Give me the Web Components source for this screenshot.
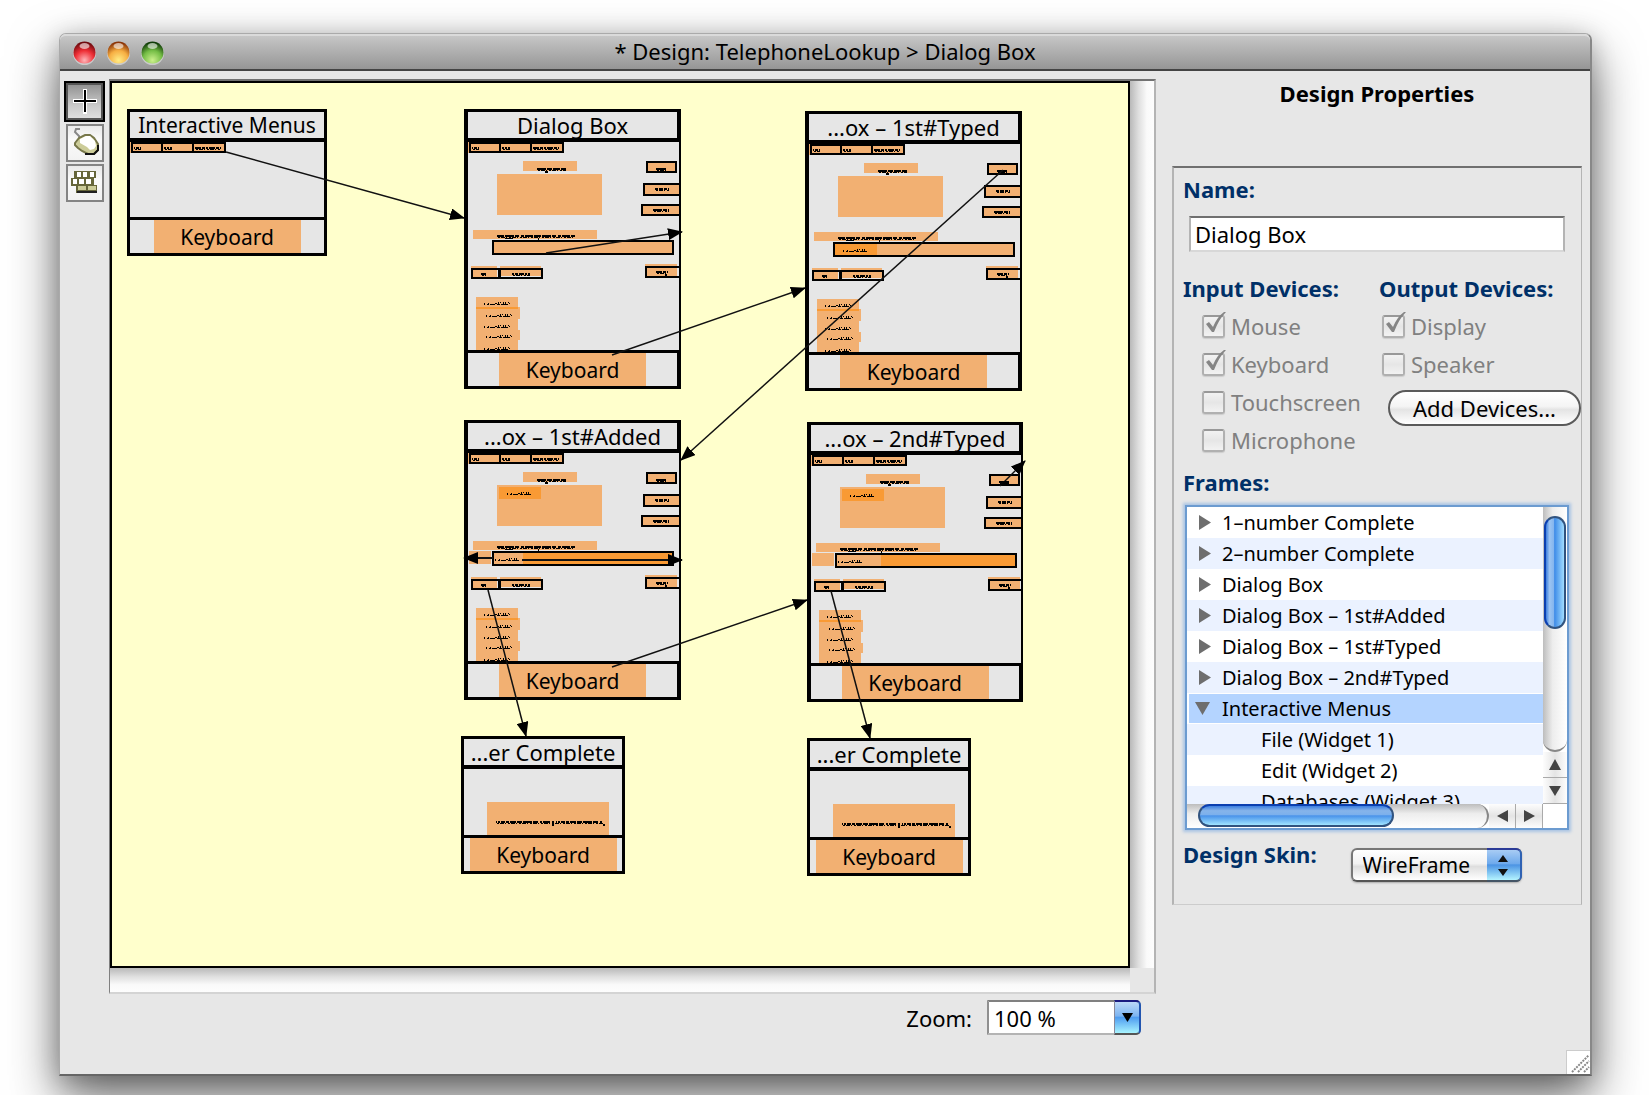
<!DOCTYPE html>
<html lang="en">
<head>
<meta charset="utf-8">
<title>Design: TelephoneLookup</title>
<style>
html,body{margin:0;background:#fff}
body{font-family:"Noto Sans","Open Sans",sans-serif;font-size:22px;line-height:28px;color:#000}
</style>
</head>
<body>
<design-app></design-app>
<script>
const define = (name, html, setup) => {
  const tpl = document.createElement('template');
  tpl.innerHTML = '<style>*{box-sizing:border-box}button,input,select{font:inherit;color:inherit;margin:0}</style>' + html;
  customElements.define(name, class extends HTMLElement {
    connectedCallback() {
      if (this.shadowRoot) return;
      this.attachShadow({mode: 'open'}).append(tpl.content.cloneNode(true));
      if (setup) setup(this, this.shadowRoot);
    }
  });
};

/* ---------- title bar ---------- */
const light = (label, id, lo, mid, hi) => `<button aria-label="${label}"><svg width="23" height="24" viewBox="0 0 23 24"><defs><radialGradient id="${id}" cx=".5" cy=".85" r=".8"><stop offset="0" stop-color="${lo}"/><stop offset=".55" stop-color="${mid}"/><stop offset="1" stop-color="${hi}"/></radialGradient></defs><circle cx="11.5" cy="12.5" r="11.5" fill="#ddd" opacity=".7"/><circle cx="11.5" cy="11.5" r="11" fill="url(#${id})"/><ellipse cx="11.5" cy="5" rx="5" ry="3" fill="#fff" opacity=".6"/></svg></button>`;
define('title-bar', `
<style>
:host{display:flex;align-items:center;height:37px;padding:0 13px;border-top:2px solid #dadada;border-bottom:2px solid #444;
 border-radius:6px 6px 0 0;background:linear-gradient(#c6c6c6,#969696)}
.lights{display:flex;gap:11px;flex:1}
button{width:23px;height:23px;border:0;padding:0;background:none;display:block}
svg{display:block}
h1{margin:0;padding-bottom:3px;font-size:22px;font-weight:400;line-height:28px;text-align:center}
.end{flex:1}
</style>
<div class="lights">${light('Close', 'red', '#ffb4b8', '#ee2e35', '#6e0a0e')}${light('Minimize', 'amber', '#ffec85', '#f6ae42', '#8a3306')}${light('Zoom window', 'green', '#ccf08c', '#74bd45', '#103c08')}</div>
<h1><slot></slot></h1>
<div class="end"></div>`);

/* ---------- tool palette ---------- */
define('tool-palette', `
<style>
:host{display:flex;flex-direction:column;align-items:center;gap:2px;padding:2px 4px 0;width:49px;flex:none}
button{display:block;width:38px;height:38px;padding:0;border:2px solid #848484;background:linear-gradient(#e9e9e9,#fafafa 40%,#f2f2f2)}
button.on{width:41px;height:41px;border:2px solid #000;outline:0;box-shadow:inset 0 0 0 2px #555;background:linear-gradient(#8d8d8d,#c9c9c9 60%,#e2e2e2)}
svg{display:block;margin:auto}
</style>
<button class="on" aria-label="Select" aria-pressed="true"><svg width="24" height="26" shape-rendering="crispEdges"><path d="M12 0v25M0 12h24" stroke="#fff" stroke-width="4"/><path d="M12 1v22M1 12h22" stroke="#000" stroke-width="2"/></svg></button>
<button aria-label="Mouse"><svg width="34" height="34"><path d="M12 3H8l-1 3 4 4 1 4" fill="none" stroke="#888" stroke-width="2"/><path d="M7 17l4-5 6-3h5l4 3 4 6v6l-4 4h-6l-6-3-4-3-3-3z" fill="#cccc99" stroke="#77774a" stroke-width="2"/><path d="M12 13l6-3h4l5 5 1 5-2 3-4 1-3-3-7-4z" fill="#fff"/><path d="M17 28h9l4-4v-5" fill="none" stroke="#111" stroke-width="2"/></svg></button>
<button aria-label="Keyboard"><svg width="34" height="34" shape-rendering="crispEdges"><path d="M6 5h22v7h-2v7h3v8H8v-7H3v-8h3z" fill="#66663a"/><path d="M9 6h4v5H9zM15 6h4v5h-4zM22 6h4v5h-4zM5 13h4v5H5zM11 13h5v5h-5zM18 13h5v5h-5z" fill="#fff"/><path d="M10 20h8v4h-8zM20 20h8v4h-8z" fill="#cccc99"/><path d="M9 26h20" stroke="#222" stroke-width="2"/></svg></button>`);

/* ---------- frame node ---------- */
define('design-frame', `
<style>
:host{display:flex;flex-direction:column;position:absolute;border:solid #000;border-width:3px 2px 3px 4px;background:#e6e6e6;overflow:hidden}
:host([plain]){border-width:3px}
.name,.key{display:flex;align-items:center;justify-content:center;border-right:2px solid #000;white-space:nowrap;overflow:hidden;flex:none}
:host([plain]) .name,:host([plain]) .key{border-right:0}
.name{height:30px;border-bottom:4px solid #000}
:host([kind=menus]) .name{font-size:21px}
.key{height:36px;border-top:3px solid #000;align-items:stretch;font-size:21px}
.key span{width:147px;text-align:center;line-height:34px;background:#f2b072}
.body{flex:1;min-height:0;overflow:hidden}
</style>
<div class="name"><slot></slot></div><div class="body"></div><div class="key"><span>Keyboard</span></div>`, (el, root) => {
  const kind = el.getAttribute('kind');
  const F = '#f2b072', H = '#f99a34';
  const fill = (x, y, w, h, c = F) => `<rect x="${x}" y="${y}" width="${w}" height="${h}" fill="${c}"/>`;
  const box = (x, y, w, h, c = 'none') => `<rect x="${x + 1}" y="${y + 1}" width="${w - 2}" height="${h - 2}" fill="${c}" stroke="#000" stroke-width="2"/>`;
  const mark = (x, y, w, d = '3 1 2 1 5 1 1 1 4 2 2 1') =>
    `<path d="M${x} ${y}h${w}" stroke="#000" stroke-width="2" stroke-dasharray="${d}"/><path d="M${x + 1} ${y + 1}h${w - 1}" stroke="#000" stroke-width="1" stroke-dasharray="2 1 4 1 1 2"/>`;
  const thin = (x, y, w) =>
    `<path d="M${x} ${y + 1}h${w}" stroke="#000" stroke-width="1" stroke-dasharray="1 2 2 1 5 2 3 1 7 3"/><path d="M${x} ${y}h${w}" stroke="#000" stroke-width="1" stroke-dasharray="1 3 1 6 2 1 1 4 1 1"/><path d="M${x + 14} ${y - 1}h${w - 15}" stroke="#000" stroke-width="1" stroke-dasharray="1 1 1 2"/>`;
  const menus = fill(0, 0, 96, 11) + box(1, 0, 32, 11) + box(31, 0, 33, 11) + box(62, 0, 34, 11)
    + mark(4, 6, 7, '1 1 3 1') + mark(34, 6, 8, '2 1 2 1') + mark(65, 6, 26, '6 1 3 1 2 1');
  let s = menus;
  if (kind === 'note') s = fill(23, 33, 122, 33) + mark(32, 53, 107, '1 1 2 1 4 1 3 1 6 1 5 1 9 1 5 2 2 1 7 2 2 2') + fill(88, 55, 2, 2, '#000') + fill(139, 55, 2, 2, '#000');
  if (kind === 'dialog') {
    const v = el.getAttribute('state');
    s += fill(55, 19, 54, 10) + mark(69, 27, 29, '9 1 5 1 7 1') + fill(77, 29, 3, 2, '#000')
      + fill(29, 32, 105, 41)
      + box(178, 19, 31, 12, F) + mark(188, 27, 10, '10 1')
      + box(175, 41, 40, 13, F) + mark(187, 47, 14, '3 1 4 1')
      + box(173, 62, 42, 12, F) + mark(185, 68, 16, '9 1 4 1')
      + fill(5, 88, 124, 9) + mark(29, 94, 78, '7 1 9 1 4 2 3 1 8 1') + fill(37, 96, 8, 1, '#000') + fill(70, 96, 1, 3, '#000');
    if (v === 'added' || v === 'second') s += fill(31, 34, 42, 12, H) + thin(39, 40, 25) + fill(1, 98, 22, 13);
    s += box(24, 98, 182, 15, F);
    if (v === 'typed') s += fill(26, 100, 42, 11, H) + thin(34, 106, 25);
    if (v === 'added' || v === 'second') s += (v === 'added' ? fill(55, 100, 149, 11, H) : fill(70, 100, 134, 11, H)) + thin(27, 106, 24);
    s += fill(3, 124, 26, 12) + box(3, 126, 29, 11) + mark(13, 132, 5, '5')
      + fill(32, 124, 41, 10) + box(31, 126, 44, 11) + mark(44, 132, 18, '2 1 3 1 5 1')
      + fill(177, 122, 32, 13) + box(177, 124, 36, 12) + mark(188, 130, 12, '6 1 3 1') + fill(197, 132, 2, 2, '#000');
    s += fill(8, 155, 42, 53) + fill(50, 165, 2, 12) + fill(50, 188, 2, 10) + fill(8, 165, 42, 2, H);
    [[16, 161], [18, 173], [16, 184], [18, 194], [16, 206]].forEach(([x, y]) => s += thin(x, y, 26));
  }
  root.querySelector('.body').innerHTML = `<svg width="213" height="208" style="display:block" shape-rendering="crispEdges" aria-hidden="true">${s}</svg>`;
});

/* ---------- canvas with its links ---------- */
define('design-canvas', `
<style>
:host{display:grid;grid-template:1fr 24px / 1fr 24px;flex:1;border:2px solid #b4b4b4;border-top-color:#727272;border-left:1px solid #808080;border-bottom-color:#d4d4d4}
.sheet{position:relative;background:#ffffcc;border:2px solid #000;overflow:hidden}
.v{background:linear-gradient(90deg,#b9b9b9,#dedede 35%,#fafafa 70%,#fdfdfd)}
.h{background:linear-gradient(#b9b9b9,#dedede 35%,#fafafa 70%,#fdfdfd)}
.c{background:#e7e7e7}
svg.links{position:absolute;left:0;top:0}
</style>
<div class="sheet"><slot></slot>
<svg class="links" width="1016" height="883" viewBox="112 83 1016 883" aria-hidden="true">
<defs><marker id="a" markerWidth="15" markerHeight="12" refX="14" refY="6" orient="auto-start-reverse" markerUnits="userSpaceOnUse"><path d="M0 0L15 6L0 12z"/></marker></defs>
<g stroke="#111" stroke-width="1.5" fill="none">
<path d="M226 152L464 218" marker-end="url(#a)"/><path d="M546 253L682 232" marker-end="url(#a)"/>
<path d="M612 355L805 288" marker-end="url(#a)"/><path d="M1003 170L681 460" marker-end="url(#a)"/>
<path d="M493 558H464" marker-end="url(#a)" stroke-width="2"/><path d="M522 560H682" marker-end="url(#a)" stroke-width="2"/>
<path d="M612 667L807 600" marker-end="url(#a)"/><path d="M488 590L526 736" marker-end="url(#a)"/>
<path d="M831 591L870 738" marker-end="url(#a)"/><path d="M1000 486L1025 461" marker-end="url(#a)"/>
</g><path d="M1000 485l4-4 5 0v4z"/></svg></div>
<div class="v"></div><div class="h"></div><div class="c"></div>`);

/* ---------- zoom row ---------- */
define('zoom-bar', `
<style>
:host{display:flex;justify-content:flex-end;align-items:center;gap:15px;margin-top:6px;padding-right:15px}
.combo{display:flex;height:35px;width:154px;position:relative}
select{appearance:none;width:100%;height:35px;padding:0 32px 0 5px;border:2px solid #b4b4b4;border-top-color:#808080;border-left-color:#909090;border-radius:0 5px 5px 0;background:#fff;outline:0}
.btn{position:absolute;right:0;top:0;width:27px;height:35px;pointer-events:none;border:solid;border-width:2px 2px 2px 1px;border-color:#1a1a80 #2255b0 #555 #889;border-radius:0 5px 5px 0;background:linear-gradient(#bcd8f8,#7db4f0 45%,#4f9df0 50%,#a8f4ff);display:flex;align-items:center;justify-content:center}
</style>
<label for="z">Zoom:</label>
<div class="combo"><select id="z"><option>100 %</option><option>50 %</option><option>200 %</option></select><span class="btn"><svg width="11" height="9"><path d="M0 0h11L5.500 9z"/></svg></span></div>`);

/* ---------- checkbox ---------- */
define('check-item', `
<style>
:host{display:flex;height:38px;color:#808080}
label{display:flex;align-items:center;gap:6px;line-height:28px;white-space:nowrap}
.b{position:relative;width:23px;height:23px;flex:none}
input{appearance:none;display:block;width:23px;height:23px;border:2px solid #b0b0b0;border-top-color:#989898;border-radius:3px;background:linear-gradient(#f2f2f2,#e6e6e6 50%,#f2f2f2);box-shadow:0 1px 1px #ccc}
svg{position:absolute;left:3px;top:-4px;display:none}
input:checked + svg{display:block}
</style>
<label><span class="b"><input type="checkbox" disabled><svg width="22" height="22"><path d="M1 13l3-2 4 5Q12 6 19 1l2 0Q14 8 9 21H7z" fill="#858585"/></svg></span><slot></slot></label>`,
(el, root) => { root.querySelector('input').checked = el.hasAttribute('checked'); });

/* ---------- frame tree ---------- */
define('tree-row', `
<style>
:host{display:flex;align-items:center;height:31px;padding-left:12px;line-height:28px;font-size:20px;white-space:nowrap;flex:none}
:host(:nth-of-type(even)){background:#ebf2ff}
:host([open]){background:#b4d4ff;border:solid #fff;border-width:1px 0 1px 2px;padding-left:6px}
:host([child]){padding-left:74px}
.t{width:23px;display:flex;flex:none}
:host([open]) .t{width:27px}
:host([child]) .t{display:none}
.down,:host([open]) .right{display:none}
:host([open]) .down{display:block}
</style>
<span class="t"><svg class="right" width="12" height="15"><path d="M0 0L12 7.500L0 15z" fill="#6e6e6e"/></svg><svg class="down" width="15" height="13"><path d="M0 0h15L7.500 13z" fill="#6e6e6e"/></svg></span><slot></slot>`);

define('frame-tree', `
<style>
:host{display:grid;grid-template:1fr 24px / 1fr 24px;height:321px;background:#fff;box-shadow:0 0 0 2px #6c9bd0,0 0 3px 4px #a9c4e4}
.rows{overflow:hidden;display:flex;flex-direction:column}
.v,.h{display:flex;background:#fff}
.v{flex-direction:column}
.v .track{flex:1;background:linear-gradient(90deg,#bdbdbd,#ededed 40%,#fff);border-radius:0 0 12px 12px;border-bottom:2px solid #888;padding-top:9px}
.h .track{flex:1;background:linear-gradient(#bdbdbd,#ededed 40%,#fff);border-radius:0 12px 12px 0;border-right:2px solid #888;padding-left:11px}
.v .thumb{width:22px;height:113px;margin:0 auto;border-radius:11px;border:2px solid #31537f;border-left-color:#0b3fb0;background:linear-gradient(90deg,#3c7fe0,#9cc4f2 20%,#86b6ee 42%,#3f8ce8 48%,#a0dcff)}
.h .thumb{width:196px;height:23px;border-radius:12px;border:2px solid #31537f;border-top-color:#0b3fb0;background:linear-gradient(#3c7fe0,#86b4ea 25%,#7cb0ec 45%,#4a93ea 52%,#a0e4ff)}
button{display:flex;align-items:center;justify-content:center;padding:0;border:0;background:linear-gradient(90deg,#fdfdfd,#e4e4e4,#fdfdfd)}
.v button{height:26px;border-bottom:1px solid #aaa}
.h button{width:27px;border-right:1px solid #aaa;background:linear-gradient(#fdfdfd,#e4e4e4,#fdfdfd)}
</style>
<div class="rows"><slot></slot></div>
<div class="v"><div class="track"><div class="thumb"></div></div>
<button aria-label="Scroll up"><svg width="12" height="11"><path d="M6 0l6 11H0z" fill="#444"/></svg></button><button aria-label="Scroll down"><svg width="12" height="10"><path d="M0 0h12L6 10z" fill="#444"/></svg></button></div>
<div class="h"><div class="track"><div class="thumb"></div></div>
<button aria-label="Scroll left"><svg width="11" height="12"><path d="M0 6l11-6v12z" fill="#444"/></svg></button><button aria-label="Scroll right"><svg width="11" height="12"><path d="M11 6L0 0v12z" fill="#444"/></svg></button></div>
<div></div>`);

/* ---------- properties panel ---------- */
define('properties-panel', `
<style>
:host{display:flex;flex-direction:column;width:434px;flex:none;padding:0 8px 0 16px}
h2{margin:0;font-size:22px;line-height:28px;text-align:center;font-weight:700}
h3,.l{margin:0;font-size:22px;line-height:28px;font-weight:700;color:#003068}
section{margin-top:59px;border:2px solid #b4b4b4;border-right-width:1px;border-top-color:#707070;border-bottom:1px solid #ccc;padding:7px 0 21px 9px}
.name{margin:13px 16px 22px 6px}
.name input{display:block;width:100%;height:36px;padding:0 4px;border:2px solid #b4b4b4;border-top-color:#707070;border-bottom-color:#d8d8d8;background:#fff;outline:0}
.l{display:block}
.dev{display:flex;gap:49px}
.in{width:147px;white-space:nowrap}
.out{flex:1;min-width:0;white-space:nowrap}
.in check-item{margin-left:19px}
.out check-item{margin-left:3px}
.in h3,.out h3{margin-bottom:5px}
.add{display:block;width:193px;height:36px;margin:7px 0 0 9px;padding:0;border:2px solid #5a5a5a;border-radius:18px;background:linear-gradient(#fff,#f4f4f4 45%,#e4e4e4 55%,#fff);line-height:28px}
.fr{margin:9px 0 11px}
frame-tree{margin:0 14px 0 4px}
.skin{display:flex;margin-top:12px}
.pop{position:relative;width:171px;height:35px;margin:8px 0 0 34px;font-size:21px}
select{appearance:none;width:100%;height:34px;padding:0 40px 0 10px;border:2px solid #777;border-bottom-color:#555;border-radius:6px;background:linear-gradient(#fff,#f2f2f2 45%,#dedede 55%,#fff);box-shadow:0 1px 2px #aaa;outline:0}
.btn{position:absolute;right:0;top:0;width:35px;height:34px;border-radius:0 6px 6px 0;border:solid;border-width:2px 2px 2px 0;border-color:#2b3b98 #2f62b4 #456;background:linear-gradient(#a8ccf4,#6faaec 45%,#4c94e4 50%,#b4f4ff);display:flex;align-items:center;justify-content:center;pointer-events:none}
</style>
<h2>Design Properties</h2>
<section>
 <label class="l" for="n">Name:</label>
 <div class="name"><input id="n" type="text" value="Dialog Box"></div>
 <div class="dev">
  <div class="in"><h3>Input Devices:</h3>
   <check-item checked>Mouse</check-item><check-item checked>Keyboard</check-item><check-item>Touchscreen</check-item><check-item>Microphone</check-item></div>
  <div class="out"><h3>Output Devices:</h3>
   <check-item checked>Display</check-item><check-item>Speaker</check-item>
   <button class="add">Add Devices...</button></div>
 </div>
 <h3 class="fr">Frames:</h3>
 <frame-tree>
  <tree-row>1–number Complete</tree-row><tree-row>2–number Complete</tree-row><tree-row>Dialog Box</tree-row>
  <tree-row>Dialog Box – 1st#Added</tree-row><tree-row>Dialog Box – 1st#Typed</tree-row><tree-row>Dialog Box – 2nd#Typed</tree-row>
  <tree-row open>Interactive Menus</tree-row><tree-row child>File (Widget 1)</tree-row><tree-row child>Edit (Widget 2)</tree-row><tree-row child>Databases (Widget 3)</tree-row>
 </frame-tree>
 <div class="skin"><label class="l" for="s">Design Skin:</label>
  <div class="pop"><select id="s"><option>WireFrame</option><option>Mac OS X</option></select><span class="btn"><svg width="10" height="21"><path d="M5 0l5 7H0zM0 14h10l-5 7z" fill="#111"/></svg></span></div></div>
</section>`);

/* ---------- window ---------- */
define('design-app', `
<style>
:host{display:flex;flex-direction:column;min-height:100vh;box-sizing:border-box;padding:33px 57px 19px 59px;overflow:hidden}
.win{position:relative;flex:1;display:flex;flex-direction:column;background:#e7e7e7;border:1px solid #aaa;border-right:2px solid #888;border-bottom:2px solid #666;border-radius:7px 7px 0 0;
 box-shadow:0 22px 50px rgba(0,0,0,.58),0 4px 24px rgba(0,0,0,.2)}
main{flex:1;display:flex;padding:8px 0 39px}
.left{flex:1;min-width:0;display:flex;flex-direction:column}
.grip{position:absolute;right:0;bottom:0;width:24px;height:24px;background:#fff;border:solid #ccc;border-width:1px 0 0 1px}
</style>
<div class="win">
 <title-bar>* Design: TelephoneLookup &gt; Dialog Box</title-bar>
 <main>
  <tool-palette></tool-palette>
  <div class="left">
   <design-canvas>
    <design-frame plain kind="menus" style="left:15px;top:26px;width:200px;height:147px">Interactive Menus</design-frame>
    <design-frame kind="dialog" style="left:352px;top:26px;width:217px;height:280px">Dialog Box</design-frame>
    <design-frame kind="dialog" state="typed" style="left:693px;top:28px;width:217px;height:280px">...ox – 1st#Typed</design-frame>
    <design-frame kind="dialog" state="added" style="left:352px;top:337px;width:217px;height:280px">...ox – 1st#Added</design-frame>
    <design-frame kind="dialog" state="second" style="left:695px;top:339px;width:216px;height:280px">...ox – 2nd#Typed</design-frame>
    <design-frame plain kind="note" style="left:349px;top:653px;width:164px;height:138px">...er Complete</design-frame>
    <design-frame plain kind="note" style="left:695px;top:655px;width:164px;height:138px">...er Complete</design-frame>
   </design-canvas>
   <zoom-bar></zoom-bar>
  </div>
  <properties-panel></properties-panel>
 </main>
 <div class="grip"><svg width="23" height="23" style="display:block"><path d="M5 21L22 4M11 21L22 10M17 21L22 16" stroke="#888" stroke-width="2" stroke-dasharray="2 1"/></svg></div>
</div>`);
</script>
</body>
</html>
